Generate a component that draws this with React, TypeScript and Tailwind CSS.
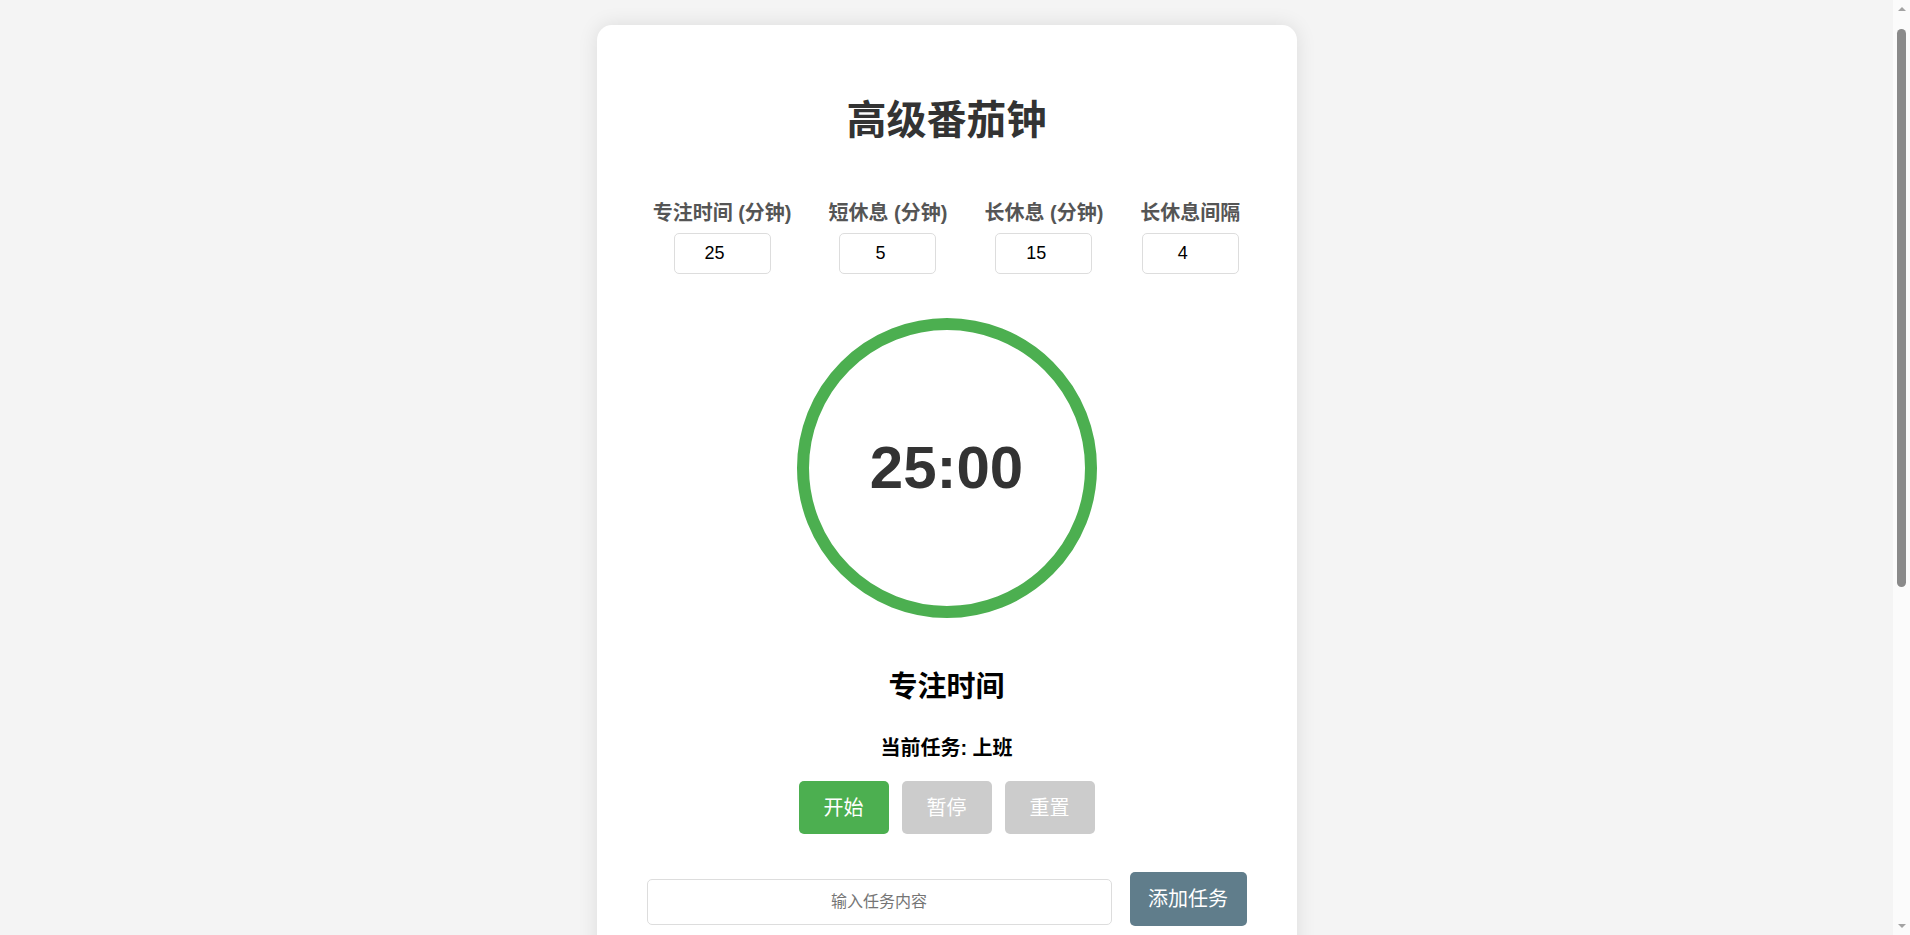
import { useState } from "react";

const FONT = { fontFamily: '"Liberation Sans", Arial, "Noto Sans CJK SC", sans-serif' };

const settings = [
  { label: "专注时间 (分钟)", value: 25 },
  { label: "短休息 (分钟)", value: 5 },
  { label: "长休息 (分钟)", value: 15 },
  { label: "长休息间隔", value: 4 },
];

// the reference shows a classic (non-overlay) scrollbar on the right
const ScrollBar = () => (
  <div className="fixed top-0 right-0 flex h-screen w-[17px] flex-col items-center bg-[#fbfbfb]">
    <svg width="10" height="17" viewBox="0 0 10 17" className="shrink-0">
      <path d="M1 11 L5 7 L9 11 Z" fill="#a3a3a3" />
    </svg>
    <div className="mt-[12px] h-[558px] w-[9px] rounded-full bg-[#8a8a8a]" />
    <div className="flex-1" />
    <svg width="10" height="17" viewBox="0 0 10 17" className="shrink-0">
      <path d="M1 6 L5 10 L9 6 Z" fill="#a3a3a3" />
    </svg>
  </div>
);

const App = () => {
  const [task, setTask] = useState("");

  return (
    <div style={FONT} className="min-h-screen bg-[#f4f4f4] pt-[25px] pr-[17px] pb-[20px]">
      <div className="mx-auto w-[700px] rounded-[15px] bg-white px-[50px] pt-[71px] pb-[40px] shadow-[0_0_20px_rgba(0,0,0,0.1)]">
        <h1 className="text-center text-[40px] leading-[48px] font-bold text-[#333]">
          高级番茄钟
        </h1>

        <div className="mt-[57px] flex justify-center gap-[37px]">
          {settings.map((s) => (
            <div key={s.label} className="flex flex-col items-center gap-[8px]">
              <label className="text-[20px] leading-[24px] font-bold whitespace-nowrap text-[#555]">
                {s.label}
              </label>
              <input
                type="number"
                defaultValue={s.value}
                className="h-[41px] w-[97px] rounded-[5px] border border-[#ddd] px-[8px] text-center text-[18px] text-black"
              />
            </div>
          ))}
        </div>

        <div className="mt-[44px] flex justify-center">
          <div className="flex h-[300px] w-[300px] items-center justify-center rounded-full border-[12px] border-[#4CAF50]">
            <span className="text-[60px] leading-none font-bold text-[#333]">25:00</span>
          </div>
        </div>

        <div className="mt-[52px] text-center text-[29px] leading-[34px] font-bold text-black">
          专注时间
        </div>

        <div className="mt-[32px] text-center text-[20px] leading-[24px] font-bold text-black">
          当前任务: 上班
        </div>

        <div className="mt-[21px] flex justify-center gap-[13px]">
          <button className="h-[53px] w-[90px] rounded-[5px] bg-[#4CAF50] text-[20px] text-white">
            开始
          </button>
          <button disabled className="h-[53px] w-[90px] rounded-[5px] bg-[#ccc] text-[20px] text-white">
            暂停
          </button>
          <button disabled className="h-[53px] w-[90px] rounded-[5px] bg-[#ccc] text-[20px] text-white">
            重置
          </button>
        </div>

        <div className="mt-[38px] flex items-end gap-[18px]">
          <input
            value={task}
            onChange={(e) => setTask(e.target.value)}
            placeholder="输入任务内容"
            className="mb-[1px] h-[46px] flex-1 rounded-[5px] border border-[#ddd] px-[10px] text-center text-[16px] placeholder:text-[#757575]"
          />
          <button className="h-[54px] w-[117px] rounded-[5px] bg-[#607D8B] text-[20px] text-white">
            添加任务
          </button>
        </div>

        <ul className="mt-[40px] flex flex-col gap-[10px]">
          <li className="flex items-center justify-between rounded-[5px] bg-[#f9f9f9] px-[15px] py-[12px] text-[18px] text-[#333]">
            <span>上班</span>
            <button className="rounded-[5px] bg-[#f44336] px-[12px] py-[6px] text-[14px] text-white">
              删除
            </button>
          </li>
        </ul>

        <div className="mt-[40px] text-center">
          <h2 className="text-[24px] leading-[30px] font-bold text-[#333]">统计</h2>
          <div className="mt-[20px] flex justify-center gap-[40px] text-[18px] text-[#555]">
            <div>已完成番茄: 0</div>
            <div>总专注时间: 0 分钟</div>
          </div>
        </div>

        <div className="mt-[40px] h-[300px] rounded-[10px] bg-[#fafafa]" />
      </div>
      <ScrollBar />
    </div>
  );
};

export default App;
